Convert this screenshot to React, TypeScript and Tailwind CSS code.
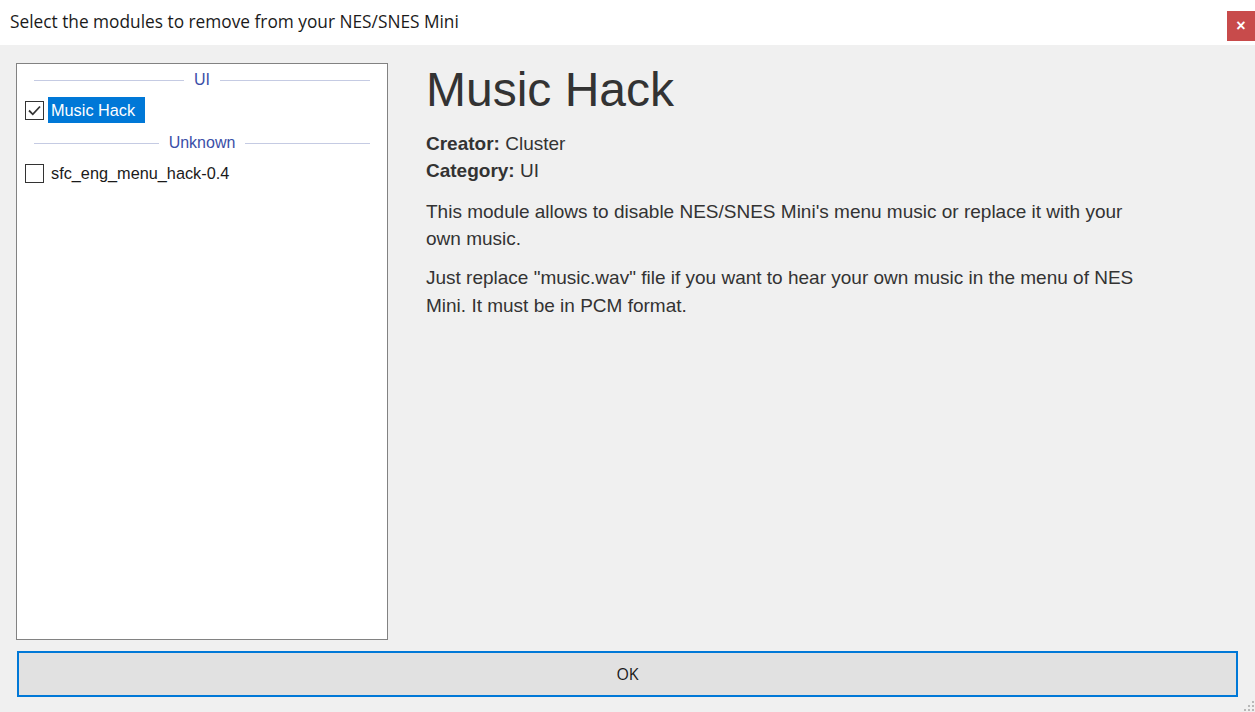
import React from "react";

const sans = { fontFamily: '"Liberation Sans", Arial, sans-serif' };
const ui = { fontFamily: '"Open Sans", "Noto Sans", sans-serif' };

function GroupHeader({ label }: { label: string }) {
  return (
    <div className="flex items-center h-[26px] pl-[17px] pr-[17px]">
      <div className="flex-1 h-px bg-[#c5cbe3]" />
      <span className="px-[10px] text-[16px] leading-none text-[#3b4fa8]" style={sans}>
        {label}
      </span>
      <div className="flex-1 h-px bg-[#c5cbe3]" />
    </div>
  );
}

function Check({ checked }: { checked: boolean }) {
  return (
    <div className="w-[19px] h-[19px] border border-[#333333] bg-white flex items-center justify-center shrink-0">
      {checked && (
        <svg width="15" height="15" viewBox="0 0 15 15">
          <path d="M2 7.5 L5.8 11.3 L13 3.5" fill="none" stroke="#333333" strokeWidth="1.8" />
        </svg>
      )}
    </div>
  );
}

export default function App() {
  return (
    <div className="w-[1255px] h-[712px] flex flex-col bg-[#f0f0f0] overflow-hidden relative">
      <div className="h-[45px] bg-white flex items-start justify-between shrink-0">
        <div className="pl-[10px] pt-[9px] text-[17.3px] leading-[26px] text-[#1a1a1a]" style={ui}>
          Select the modules to remove from your NES/SNES Mini
        </div>
        <div className="mt-[11px] w-[28px] h-[30px] bg-[#c84b4b] flex items-center justify-center text-white text-[16px] font-bold leading-none" style={sans}>
          ×
        </div>
      </div>
      <div className="flex-1 flex flex-col px-[16px] pt-[18px] pb-[15px]">
        <div className="flex flex-1 min-h-0">
          <div className="w-[372px] border border-[#828282] bg-white pt-[3px] shrink-0">
            <GroupHeader label="UI" />
            <div className="flex items-center h-[34px] mb-[3px] pl-[8px]">
              <Check checked />
              <div className="ml-[4px] h-[26px] pl-[3px] pr-[10px] bg-[#0078d7] text-white flex items-center text-[16.3px]" style={sans}>
                Music Hack
              </div>
            </div>
            <GroupHeader label="Unknown" />
            <div className="flex items-center h-[34px] pl-[8px]">
              <Check checked={false} />
              <div className="ml-[7px] text-[16.3px] text-[#1a1a1a]" style={sans}>
                sfc_eng_menu_hack-0.4
              </div>
            </div>
          </div>
          <div className="pl-[38px] text-[#333333] max-w-[780px]" style={sans}>
            <div className="text-[48px] leading-[54px]">Music Hack</div>
            <div className="mt-[13px] text-[19px] leading-[27px]">
              <div>
                <span className="font-bold">Creator:</span> Cluster
              </div>
              <div>
                <span className="font-bold">Category:</span> UI
              </div>
            </div>
            <p className="mt-[14px] text-[19px] leading-[27px] max-w-[730px]">
              This module allows to disable NES/SNES Mini's menu music or replace it with your own music.
            </p>
            <p className="mt-[12px] text-[19px] leading-[28px] max-w-[730px]">
              Just replace "music.wav" file if you want to hear your own music in the menu of NES Mini. It must be in PCM format.
            </p>
          </div>
        </div>
        <div className="mt-[11px] ml-[1px] mr-[1px] h-[46px] border-2 border-[#0078d7] bg-[#e1e1e1] flex items-center justify-center text-[16px] text-[#1a1a1a] shrink-0" style={ui}>
          OK
        </div>
      </div>
      <svg className="absolute right-0 bottom-0" width="12" height="12" viewBox="0 0 12 12">
        {[
          [9, 1],
          [9, 5],
          [5, 5],
          [9, 9],
          [5, 9],
          [1, 9],
        ].map(([x, y], i) => (
          <rect key={i} x={x} y={y} width="2" height="2" fill="#b8b8b8" />
        ))}
      </svg>
    </div>
  );
}
